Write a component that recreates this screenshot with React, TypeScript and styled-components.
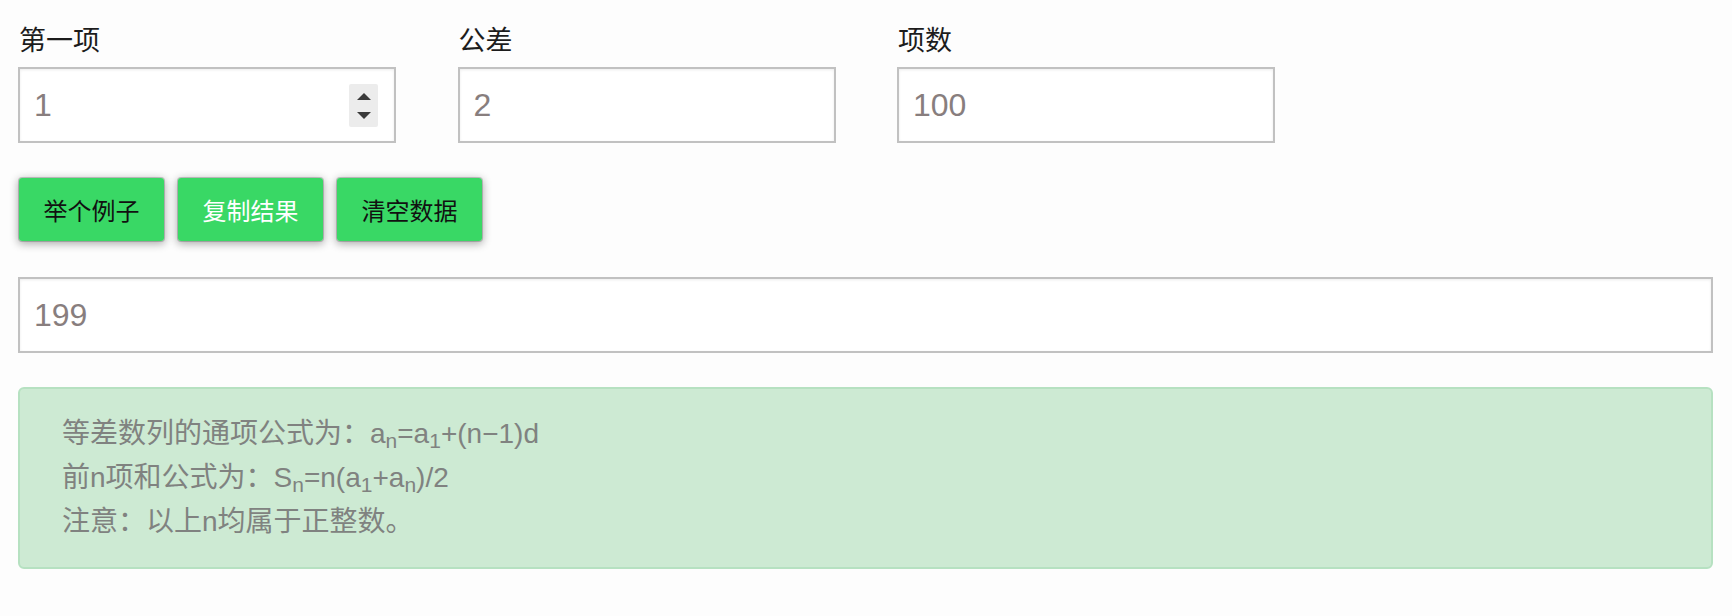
import React from "react";
import styled, { createGlobalStyle } from "styled-components";

const GlobalStyle = createGlobalStyle`
  html, body {
    margin: 0;
    padding: 0;
    background: #fdfdfd;
  }
  body {
    font-family: "Liberation Sans", "Noto Sans CJK SC", sans-serif;
  }
  * { box-sizing: border-box; }
`;

const Page = styled.div`
  width: 1732px;
  padding: 21px 19px 0 18px;
  display: flex;
  flex-direction: column;
`;

const FieldGrid = styled.div`
  display: grid;
  grid-template-columns: repeat(3, 378px);
  column-gap: 61.5px;
`;

const FieldGroup = styled.div`
  display: flex;
  flex-direction: column;
`;

const Label = styled.label`
  font-family: "Noto Sans CJK SC", sans-serif;
  font-size: 27px;
  line-height: 35px;
  height: 35px;
  color: #1c1c1c;
  margin-bottom: 11px;
  padding-left: 1px;
`;

const Field = styled.div<{ $full?: boolean }>`
  display: flex;
  align-items: center;
  height: 76px;
  width: ${(p) => (p.$full ? "100%" : "378px")};
  border: 2px solid #c1c1c1;
  background: #fff;
  box-shadow: inset 0 1px 3px rgba(0, 0, 0, 0.08);
  padding: 0 16px 0 14px;
`;

const ValueInput = styled.input`
  flex: 1;
  min-width: 0;
  border: none;
  outline: none;
  background: transparent;
  padding: 0;
  font-family: "Liberation Sans", sans-serif;
  font-size: 32px;
  color: #887e7e;
`;

const Spinner = styled.div`
  flex: none;
  width: 29px;
  height: 43px;
  background: #ececec;
  border-radius: 2px;
  display: flex;
  flex-direction: column;
  align-items: center;
  padding-top: 9px;
  gap: 12px;
`;

const ButtonRow = styled.div`
  display: flex;
  gap: 12px;
  margin-top: 34px;
`;

const GreenButton = styled.button<{ $light?: boolean }>`
  width: 147px;
  height: 65px;
  padding: 0;
  border: 1px solid rgba(0, 0, 0, 0.18);
  background: #39d865;
  background-clip: padding-box;
  border-radius: 4px;
  box-shadow: 0 2px 9px rgba(0, 0, 0, 0.32);
  font-family: "Noto Sans CJK SC", sans-serif;
  font-size: 24px;
  color: ${(p) => (p.$light ? "#ffffff" : "#111111")};
  cursor: pointer;
`;

const ResultRow = styled.div`
  margin-top: 35px;
`;

const Alert = styled.div`
  margin-top: 34px;
  height: 182px;
  background: #cdead3;
  border: 2px solid #b6e1c1;
  border-radius: 6px;
  padding: 23px 40px 0 42px;
  font-family: "Liberation Sans", "Noto Sans CJK SC", sans-serif;
  font-size: 28px;
  line-height: 44px;
  color: #808280;
`;

const Line = styled.div`
  white-space: nowrap;
`;

const Sub = styled.sub`
  font-size: 75%;
  line-height: 0;
  position: relative;
  vertical-align: baseline;
  bottom: -0.25em;
`;

function Arrows() {
  return (
    <>
      <svg width="14" height="7" viewBox="0 0 14 7">
        <path d="M7 0 L14 7 L0 7 Z" fill="#3a3a3a" />
      </svg>
      <svg width="14" height="7" viewBox="0 0 14 7">
        <path d="M0 0 L14 0 L7 7 Z" fill="#3a3a3a" />
      </svg>
    </>
  );
}

export default function App() {
  return (
    <>
      <GlobalStyle />
      <Page>
        <FieldGrid>
          <FieldGroup>
            <Label>第一项</Label>
            <Field>
              <ValueInput defaultValue="1" />
              <Spinner>
                <Arrows />
              </Spinner>
            </Field>
          </FieldGroup>
          <FieldGroup>
            <Label>公差</Label>
            <Field>
              <ValueInput defaultValue="2" />
            </Field>
          </FieldGroup>
          <FieldGroup>
            <Label>项数</Label>
            <Field>
              <ValueInput defaultValue="100" />
            </Field>
          </FieldGroup>
        </FieldGrid>

        <ButtonRow>
          <GreenButton>举个例子</GreenButton>
          <GreenButton $light>复制结果</GreenButton>
          <GreenButton>清空数据</GreenButton>
        </ButtonRow>

        <ResultRow>
          <Field $full>
            <ValueInput defaultValue="199" />
          </Field>
        </ResultRow>

        <Alert>
          <Line>
            等差数列的通项公式为：a<Sub>n</Sub>=a<Sub>1</Sub>+(n−1)d
          </Line>
          <Line>
            前n项和公式为：S<Sub>n</Sub>=n(a<Sub>1</Sub>+a<Sub>n</Sub>)/2
          </Line>
          <Line>注意：以上n均属于正整数。</Line>
        </Alert>
      </Page>
    </>
  );
}
